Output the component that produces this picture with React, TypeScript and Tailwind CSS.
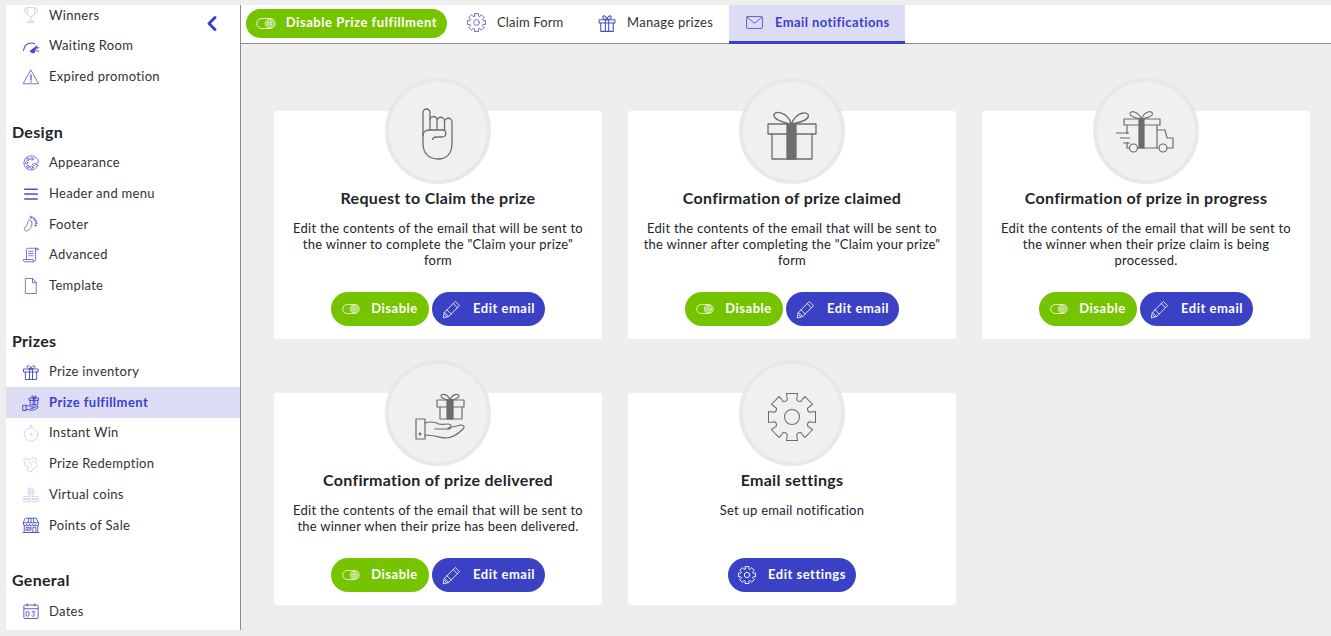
import React from 'react';
import { ChevronLeft } from 'lucide-react';

type IconProps = { className?: string };

const Svg: React.FC<IconProps & { children: React.ReactNode; box?: string; sw?: number }> = ({ className, children, box = '0 0 24 24', sw = 1 }) => (
  <svg viewBox={box} fill="none" stroke="currentColor" strokeWidth={sw} strokeLinecap="round" strokeLinejoin="round" className={className}>
    {children}
  </svg>
);

// 8 tooth gear, flat tooth on top, concave valleys
const gearPath = (() => {
  const pt = (r: number, a: number) => `${(12 + r * Math.cos(a)).toFixed(2)} ${(12 + r * Math.sin(a)).toFixed(2)}`;
  let d = '';
  for (let k = 0; k < 8; k++) {
    const a = (k * Math.PI) / 4 - Math.PI / 2;
    d += `${k === 0 ? 'M' : 'A1.800 1.800 0 0 0'}${pt(8.6, a - 0.27)} L${pt(11.6, a - 0.23)} L${pt(11.6, a + 0.23)} L${pt(8.6, a + 0.27)} `;
  }
  return d + 'A1.800 1.800 0 0 0' + pt(8.6, -Math.PI / 2 - 0.27) + 'Z';
})();

const Trophy = (p: IconProps) => (
  <Svg {...p}><path d="M7 2h10v7a5 5 0 0 1-10 0z" /><path d="M7 4H3c0 4 1.500 6 5 7M17 4h4c0 4-1.500 6-5 7M12 14v6M8 22h8v-2H8z" /></Svg>
);
const Gauge = (p: IconProps) => (
  <Svg {...p} sw={1.400}><path d="M2 18C3 11 8 8 13 8c2 0 3 .4 4 1" /><path d="M11 19l9-7-4 9-2 0z" fill="currentColor" /><path d="M20 18l2 1M20 15l2-1" /></Svg>
);
const Warning = (p: IconProps) => (
  <Svg {...p}><path d="M12 3L22 21H2z" /><path d="M12 9v7" strokeWidth={1.600} /><path d="M12 18.200v.4" strokeWidth={1.600} /></Svg>
);
const Palette = (p: IconProps) => (
  <Svg {...p}><path d="M21 15c-1-2-3-1-4 0-1 .8-3 0-3-1 0-2 8-1 8-3C22 6 17 2.500 12 2.500A9.500 9.500 0 1 0 21 15z" /><circle cx="8" cy="7" r="1.700" /><circle cx="13.500" cy="6.500" r="1.700" /><circle cx="6" cy="12" r="1.700" /><circle cx="8" cy="17" r="1.700" /><circle cx="13" cy="18" r="1.700" /></Svg>
);
const Menu = (p: IconProps) => (
  <Svg {...p} sw={2}><path d="M3 5.500h18M3 12h18M3 18.500h18" strokeLinecap="butt" /></Svg>
);
const Foot = (p: IconProps) => (
  <Svg {...p}><path d="M13 9c1 4 0 7-3 10-2 3-7 3-7 0 0-2 3-4 4-7s1-4 2-5 3 0 4 2z" /><circle cx="12" cy="3" r="1.500" /><circle cx="16" cy="5" r="1.200" /><circle cx="18" cy="8" r="1.100" /><circle cx="19" cy="11" r="1" /><circle cx="18" cy="14" r="1" /></Svg>
);
const Scroll = (p: IconProps) => (
  <Svg {...p}><path d="M6 18V5a2 2 0 0 1 2-2h12a2 2 0 0 1 2 2H18M18 3v15a3 3 0 0 1-3 3H4a2 2 0 0 1-2-3h13c0 1 .5 3 0 3" /><path d="M9 7h6M9 10h6M9 13h6" /></Svg>
);
const FileIcon = (p: IconProps) => (
  <Svg {...p}><path d="M5 2h9l5 5.500V22H5z" /><path d="M14 2v5.500h5" /></Svg>
);
const Gift = (p: IconProps) => (
  <Svg {...p} sw={1.300}><rect x="2.500" y="8" width="19" height="4" /><path d="M4.500 12v10h15V12M10 8v14M14 8v14" /><path d="M12 8C9 8 6.500 6.500 7 4.500S11 3 12 8zM12 8c3 0 5.500-1.500 5-3.500S13 3 12 8z" /></Svg>
);
const HandGift = (p: IconProps) => (
  <Svg {...p} sw={1.200}><rect x="10" y="5.500" width="12" height="3" /><path d="M11 8.500v6h10v-6M15 5.500v9M17 5.500v9" /><path d="M16 5.500c-2 0-3.500-1-3-2.500s3 0 3 2.500zM16 5.500c2 0 3.500-1 3-2.500s-3 0-3 2.500z" /><path d="M1.500 15h4v7h-4zM5.500 16c3-1 5 0 7 1h2c1.500 0 1.500 2 0 2h-3M15 18.500l5-2c2 0 2 1.500 1 2-3 2-6 3.500-9 3l-6.500-1" /></Svg>
);
const Timer = (p: IconProps) => (
  <Svg {...p}><circle cx="12" cy="14" r="9" /><path d="M10 2h4M12 2v3M12 14l2-2" /><circle cx="12" cy="14" r="1" /></Svg>
);
const Tickets = (p: IconProps) => (
  <Svg {...p}><path d="M3 5l8 1 3-3 6 3-2 4 3 3-3 5-3-1-2 5-6-1v-4l-3-3z" /><path d="M9 9l4 4M14 8l2 2M8 14l2 2" /></Svg>
);
const Coins = (p: IconProps) => (
  <Svg {...p}><rect x="8" y="3" width="8" height="3" rx="1.500" /><rect x="8" y="6" width="8" height="3" rx="1.500" /><rect x="8" y="9" width="8" height="3" rx="1.500" /><rect x="2" y="14" width="9" height="3.500" rx="1.700" /><rect x="2" y="17.500" width="9" height="3.500" rx="1.700" /><rect x="13" y="14" width="9" height="3.500" rx="1.700" /><rect x="13" y="17.500" width="9" height="3.500" rx="1.700" /></Svg>
);
const Store = (p: IconProps) => (
  <Svg {...p} sw={1.200}><path d="M5 3h14l3 6H2zM2 9v2a2 2 0 0 0 4 0 2 2 0 0 0 4 0 2 2 0 0 0 4 0 2 2 0 0 0 4 0 2 2 0 0 0 4 0V9" /><path d="M9 3L8 9M15 3l1 6M12 3v6M3 13v9h18v-9M1.500 22h21M14.500 22v-7h4v7M6 15h6v4H6zM7 18l4-2" /></Svg>
);
const Calendar = (p: IconProps) => (
  <svg viewBox="0 0 24 24" fill="none" stroke="currentColor" strokeWidth={1.200} className={p.className}>
    <rect x="2.500" y="4" width="19" height="18" rx="1.500" />
    <path d="M2.500 9h19M7 2v4M17 2v4" />
    <path d="M7.500 12.500a2 2 0 0 1 2 2v2.500a2 2 0 0 1-4 0v-2.500a2 2 0 0 1 2-2zM13 13h4l-2 2.500a1.800 1.800 0 1 1-2 2.500" />
  </svg>
);
const Cog = ({ className, sw = 1 }: IconProps & { sw?: number }) => (
  <Svg className={className} sw={sw}>
    <circle cx="12" cy="12" r="3.600" />
    <path d={gearPath} />
  </Svg>
);
const Mail = (p: IconProps) => (
  <Svg {...p}><rect x="2" y="4.500" width="20" height="15" rx="1.500" /><path d="M2.500 5.500L12 13l9.500-7.500" /></Svg>
);
const Toggle = (p: IconProps) => (
  <svg viewBox="0 0 24 14" fill="none" stroke="currentColor" strokeWidth={1} className={p.className}>
    <rect x="1" y="1" width="22" height="12" rx="6" />
    <circle cx="16" cy="7" r="5" />
    <circle cx="16" cy="7" r="3" />
    <path d="M15 5.200v3.600M17 5.200v3.600" />
  </svg>
);
const Pencil = (p: IconProps) => (
  <Svg {...p}><path d="M3 16L16 3l5 5L8 21l-6 1.500z" /><path d="M6 13l5 5M13.500 5.500l5 5M3 16l5 5M3.500 19l2 2" /></Svg>
);

const Hand = (p: IconProps) => (
  <svg viewBox="0 0 32 52" fill="none" stroke="#6d6d6d" strokeWidth={1.300} strokeLinecap="round" strokeLinejoin="round" className={p.className}>
    <path d="M1 28V4.500a3.500 3.500 0 0 1 7 0V22" />
    <path d="M8 12a3.500 3.500 0 0 1 7 0v10M15 13a3.500 3.500 0 0 1 7.500 0v9M22.500 14a3.500 3.500 0 0 1 7.500 0v21c0 10-5 16-14 16S1 45 1 36V27c0-3 3-5 7-5h13c4 0 4 7-1 7h-6c-2 0-3 1-3.500 2.500" />
  </svg>
);
const BigGift = (p: IconProps) => (
  <svg viewBox="0 0 50 50" fill="none" stroke="#6d6d6d" strokeWidth={1.300} strokeLinejoin="round" className={p.className}>
    <rect x="1" y="14" width="48" height="10" />
    <path d="M5 24v25h40V24" />
    <rect x="20" y="14" width="9" height="35" fill="#6d6d6d" />
    <path d="M24.500 14C18 13 8 10 7 6c-1-6 13-5 17.500 8zM24.500 14c6-1 16-3 17-8 0-5-12-5-17 8z" />
  </svg>
);
const Truck = (p: IconProps) => (
  <svg viewBox="0 0 60 45" fill="none" stroke="#6d6d6d" strokeWidth={1.200} strokeLinejoin="round" className={p.className}>
    <rect x="9" y="9" width="36" height="6" />
    <path d="M12 15v9M12 32v6h2M23 38h19V15M42 20h8l2 8h6v10h-6M44 38h-2" />
    <rect x="24" y="9" width="5" height="29" fill="#6d6d6d" />
    <path d="M26.500 9C21 8 15 6 15 4c0-4 8-3 11.500 5zM26.500 9c5-1 11-3 11-5 0-4-8-3-11 5z" />
    <circle cx="18.500" cy="38" r="4" />
    <circle cx="48" cy="38" r="4" />
    <path d="M1 23h13M5 28h10M8 33h7" />
  </svg>
);
const BigHandGift = (p: IconProps) => (
  <svg viewBox="0 0 50 50" fill="none" stroke="#6d6d6d" strokeWidth={1.200} strokeLinejoin="round" strokeLinecap="round" className={p.className}>
    <rect x="22" y="7" width="27" height="7" />
    <path d="M25 14v12h22V14" />
    <rect x="32" y="7" width="6" height="19" fill="#6d6d6d" />
    <path d="M35 7c-4 0-9-2-9-4 0-3 7-2 9 4zM35 7c4 0 9-2 9-4 0-3-7-2-9 4z" />
    <path d="M1 26h9v20H1z" />
    <circle cx="5" cy="41" r="0.800" fill="#6d6d6d" />
    <path d="M10 30c6-2 10-1 14 1 2 1 6 0 9 0 4 0 4 5 0 5H20M33 35l13-3c3 0 4 2 2 4-4 4-10 9-17 9-5 0-12-3-21-3" />
  </svg>
);

type NavItem = { label: string; icon: (p: IconProps) => React.ReactNode; faded?: boolean; active?: boolean };
type NavGroup = { title?: string; items: NavItem[] };

const groups: NavGroup[] = [
  { items: [
    { label: 'Winners', icon: Trophy, faded: true },
    { label: 'Waiting Room', icon: Gauge },
    { label: 'Expired promotion', icon: Warning },
  ] },
  { title: 'Design', items: [
    { label: 'Appearance', icon: Palette },
    { label: 'Header and menu', icon: Menu },
    { label: 'Footer', icon: Foot },
    { label: 'Advanced', icon: Scroll },
    { label: 'Template', icon: FileIcon },
  ] },
  { title: 'Prizes', items: [
    { label: 'Prize inventory', icon: Gift },
    { label: 'Prize fulfillment', icon: HandGift, active: true },
    { label: 'Instant Win', icon: Timer, faded: true },
    { label: 'Prize Redemption', icon: Tickets, faded: true },
    { label: 'Virtual coins', icon: Coins, faded: true },
    { label: 'Points of Sale', icon: Store },
  ] },
  { title: 'General', items: [
    { label: 'Dates', icon: Calendar },
  ] },
];

type Card = { title: string; lines: string[]; icon: React.ReactNode; settings?: boolean };

const cards: Card[] = [
  { title: 'Request to Claim the prize', lines: ['Edit the contents of the email that will be sent to', 'the winner to complete the "Claim your prize"', 'form'], icon: <Hand className="w-[32px] h-[52px] mt-[6px]" /> },
  { title: 'Confirmation of prize claimed', lines: ['Edit the contents of the email that will be sent to', 'the winner after completing the "Claim your prize"', 'form'], icon: <BigGift className="w-[50px] h-[50px] mt-[8px]" /> },
  { title: 'Confirmation of prize in progress', lines: ['Edit the contents of the email that will be sent to', 'the winner when their prize claim is being', 'processed.'], icon: <Truck className="w-[60px] h-[45px] mt-[3px] mr-[2px]" /> },
  { title: 'Confirmation of prize delivered', lines: ['Edit the contents of the email that will be sent to', 'the winner when their prize has been delivered.'], icon: <BigHandGift className="w-[50px] h-[50px] mt-[10px] ml-[4px]" /> },
  { title: 'Email settings', lines: ['Set up email notification'], icon: <Cog className="w-[50px] h-[50px] mt-[7px] text-[#6d6d6d]" sw={0.500} />, settings: true },
];

const EmailCard: React.FC<{ card: Card }> = ({ card }) => (
  <div className="bg-white rounded-[3px] flex flex-col items-center pb-[13px]">
    <div className="-mt-[33px] w-[106px] h-[106px] rounded-full bg-[#f0f0f0] border-4 border-[#e8e8e8] flex items-center justify-center shrink-0">
      {card.icon}
    </div>
    <h3 className="mt-[3px] text-[16px] leading-[22px] font-bold text-[#212529] tracking-[0.3px]">{card.title}</h3>
    <p className="mt-[11px] text-[13px] leading-[16px] tracking-[0.25px] text-[#212529] text-center">
      {card.lines.map((l) => (
        <span key={l} className="block">{l}</span>
      ))}
    </p>
    <div className="flex gap-[3px] mt-auto pt-[24px]">
      {card.settings ? (
        <button className="h-[34px] w-[128px] rounded-full bg-[#3b41c5] text-white text-[13px] font-bold tracking-[0.5px] flex items-center justify-center gap-[12px]">
          <Cog className="w-[18px] h-[18px]" sw={1.200} /> Edit settings
        </button>
      ) : (
        <>
          <button className="h-[34px] w-[98px] rounded-full bg-[#76c400] text-white text-[13px] font-bold tracking-[0.5px] flex items-center justify-center gap-[11px]">
            <Toggle className="w-[18px] h-[12px]" /> Disable
          </button>
          <button className="h-[34px] w-[113px] rounded-full bg-[#3b41c5] text-white text-[13px] font-bold tracking-[0.5px] flex items-center justify-center gap-[11px]">
            <Pencil className="w-[20px] h-[20px]" /> Edit email
          </button>
        </>
      )}
    </div>
  </div>
);

export default function App() {
  return (
    <div className="h-screen overflow-hidden bg-[#eeeeee] pt-[5px] pb-[6px] pl-[6px] flex font-['Lato','Open_Sans',sans-serif] text-[#212529]">
      <aside className="relative w-[235px] shrink-0 bg-white border-r border-[#8c8c8c] overflow-hidden">
        <ChevronLeft className="absolute left-[194px] top-[6px] w-[24px] h-[25px] text-[#3b41c5]" strokeWidth={3} />
        <nav className="-mt-[5px]">
          {groups.map((g, i) => (
            <div key={i} className={g.title ? 'mt-[25.500px]' : ''}>
              {g.title && <h4 className="pl-[6px] h-[30px] pb-[2px] flex items-center text-[16px] font-bold tracking-[0.3px] text-[#212529]">{g.title}</h4>}
              {g.items.map((it) => {
                const Icon = it.icon;
                return (
                  <div key={it.label} className={`h-[30.700px] flex items-center text-[13px] ${it.active ? 'bg-[#dddcf5] text-[#3b41c5] font-bold tracking-[0.45px]' : 'text-[#333333] tracking-[0.3px]'}`}>
                    <span className={`w-[43px] flex justify-center pl-[6px] ${it.faded ? 'opacity-30' : ''} ${it.active ? '' : 'text-[#4a4fc4]'}`}>
                      <Icon className="w-[18px] h-[18px]" />
                    </span>
                    {it.label}
                  </div>
                );
              })}
            </div>
          ))}
        </nav>
      </aside>
      <main className="flex-1 min-w-0">
        <div className="h-[39px] bg-white border-b border-[#8c8c8c] flex items-stretch pl-[5px]">
          <div className="flex items-center pb-[1px]">
            <button className="h-[29px] w-[201px] rounded-full bg-[#76c400] text-white text-[13px] font-bold tracking-[0.55px] flex items-center justify-center gap-[10px] pb-[1px]">
              <Toggle className="w-[20px] h-[13px]" /> Disable Prize fulfillment
            </button>
          </div>
          <div className="w-[142px] pl-[20px] pb-[3px] flex items-center gap-[11px] text-[13px] tracking-[0.15px] text-[#333333]">
            <Cog className="w-[19px] h-[19px] text-[#4a4fc4]" /> Claim Form
          </div>
          <div className="w-[140px] pl-[8px] pb-[3px] flex items-center gap-[10px] text-[13px] tracking-[0.3px] text-[#333333]">
            <Gift className="w-[20px] h-[20px] text-[#4a4fc4]" /> Manage prizes
          </div>
          <div className="w-[176px] pl-[16px] pb-[1px] bg-[#dddcf5] border-b-[3px] border-[#3b41c5] -mb-[1px] flex items-center gap-[11px] text-[13px] font-bold tracking-[0.42px] text-[#3b41c5]">
            <Mail className="w-[19px] h-[19px]" /> Email notifications
          </div>
        </div>
        <div className="pl-[33px] pt-[67px] grid grid-cols-[328px_328px_328px] gap-x-[26px] gap-y-[54px] items-stretch">
          {cards.map((c) => (
            <EmailCard key={c.title} card={c} />
          ))}
        </div>
      </main>
    </div>
  );
}
